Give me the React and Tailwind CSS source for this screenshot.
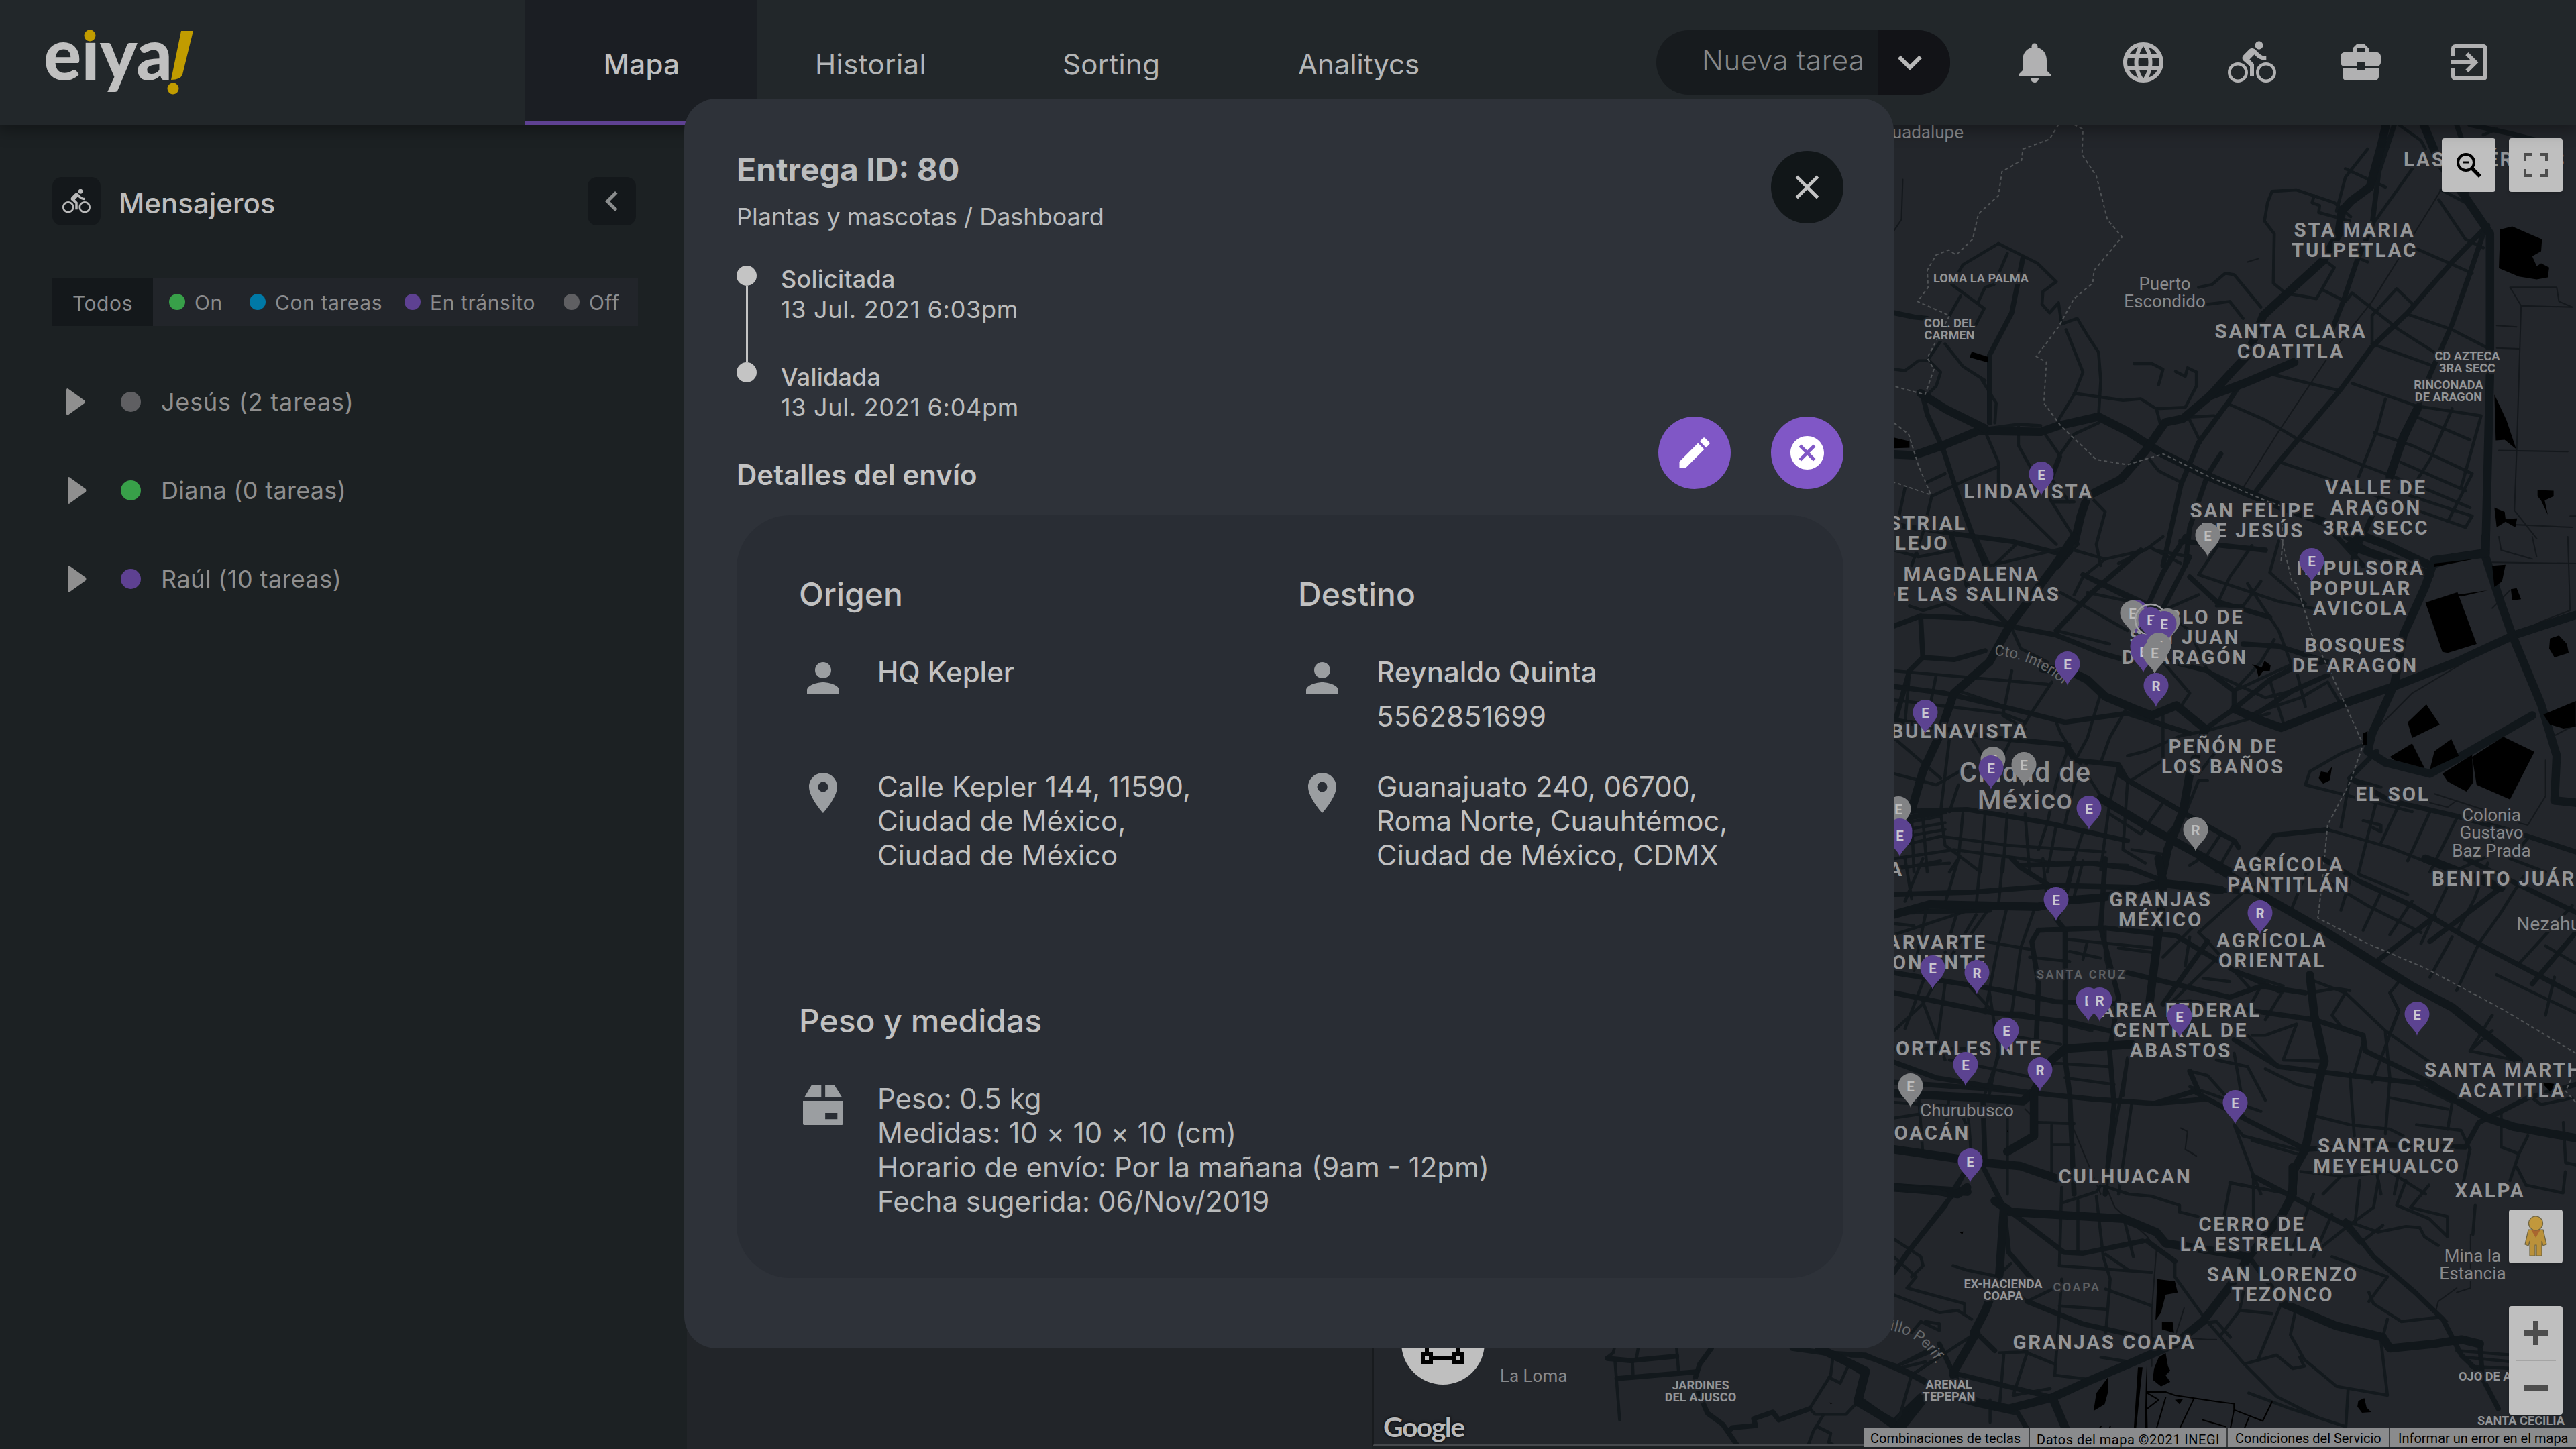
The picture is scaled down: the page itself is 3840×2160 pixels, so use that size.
import React from "react";
import {
  MdNotifications,
  MdLanguage,
  MdDirectionsBike,
  MdBusinessCenter,
  MdExitToApp,
  MdExpandMore,
  MdChevronLeft,
  MdClose,
  MdEdit,
  MdCancel,
  MdPerson,
  MdPlace,
} from "react-icons/md";

/* ---------- Map data ---------- */

// Each sector keeps its own grid; the matrix maps it onto the map's pixels.
const SECTORS = [
  {
    matrix: "matrix(0.6631 0 0 0.4209 2800 180)",
    wide: [
      "M20 1180 80 1185 145 1150 225 1098 365 1102 405 1080 495 1048 560 1100 640 1180 740 1258 870 1345 1000 1420 1140 1500 1240 1575",
      "M95 965 150 1020 240 1090",
      "M400 1575 440 1500 455 1400 470 1330 545 1270 600 1170 645 1068 685 1055 745 975 830 925 935 855",
      "M745 975 800 880 830 830 865 690 920 610 1000 495 1035 400 1042 320 1062 285 1105 235 1130 90 1142 10",
      "M1225 10 1262 150 1315 260 1375 400 1375 900 1365 1530 1290 1548 1240 1575",
      "M1150 1260 1180 1120 1212 1020",
    ],
    mid: [
      "M690 1575 700 1440 740 1255 770 1180",
      "M640 1575 680 1290 720 1140 790 990 810 940",
      "M850 1310 900 1210 1040 950 1110 800 1190 680 1290 500 1370 370",
      "M1060 1575 1130 1330 1212 1020 1240 900 1290 720 1330 540 1360 400",
      "M100 975 110 1040 145 1160 180 1330 210 1460 240 1575",
      "M250 1070 250 830 300 680 325 485",
      "M1020 740 1045 640 1075 500 1110 370 1125 180 1160 14",
      "M35 1430 180 1465 300 1490 400 1530",
      "M1000 1420 1090 1575",
      "M1300 14 1330 150 1320 270",
      "M1330 14 1420 45 1530 90",
      "M35 680 80 695 110 700",
    ],
    thin: [
      "M270 435 190 510 165 580 238 665 210 750",
      "M270 435 358 505 400 570 370 605 368 650 385 680 405 645 412 720 447 700 470 760 495 820 500 920 495 1050",
      "M422 740 460 890 440 970 405 1060",
      "M440 965 550 990 590 985 625 1020 690 1015 715 940 715 890 695 875 690 905 668 888",
      "M625 1020 635 1080 645 1070",
      "M575 860 615 860 640 880 630 935",
      "M790 1005 870 1060 940 1125 1090 1220 1240 1310 1330 1370",
      "M890 900 1035 955 M1065 930 1210 1010 1355 1045 1310 1300",
      "M1190 685 1290 740 1370 805 M1110 790 1250 870 M1205 450 1335 540",
      "M905 1210 980 1250 1140 1340 1320 1440 1335 1400 1170 1315",
      "M1115 1105 1200 1150 1335 1250 1280 1420 M1212 1050 1330 1130 M1175 1210 1320 1310",
      "M1140 985 1120 1100 1080 1260 M1290 1020 1240 1200 1200 1300",
      "M720 590 750 580 780 540 800 545 860 660 M740 650 790 640 820 700",
      "M885 250 940 245 1025 290 1062 340 M885 250 875 290 868 355 890 400 888 575 915 610 985 630 1025 520 1000 490",
      "M980 265 975 290 992 300 990 325 1060 355 M1000 600 1050 640 1065 610 1110 665 1170 740 1230 800 1250 820",
      "M1110 790 1110 690 1165 595 1205 655 M1085 490 1100 500",
      "M1170 14 1220 70 1230 100 M1360 50 1390 30 M1205 160 1110 370 M1260 280 1320 420 1360 450 M1265 245 1320 290",
      "M230 910 265 1000 262 1070 M35 880 60 885 90 850 115 850 140 890 130 940 110 970 M150 790 190 870 240 920",
      "M240 1100 270 1210 270 1300 400 1500 M315 1075 315 1150 350 1250 450 1500 M375 1110 410 1190 390 1270 430 1350",
      "M495 1070 440 1110 405 1190 385 1270 M120 1330 200 1270 270 1225 M110 1280 150 1250 M245 1090 315 1075 365 1080",
      "M120 1330 100 1460 75 1575 M60 1300 40 1450 M390 1350 440 1350 M470 1320 510 1385 490 1500 500 1575",
      "M610 1200 630 1240 680 1280 M690 1050 755 1045 M700 1060 725 1140 M540 1568 610 1510 680 1568 M310 1500 260 1575",
      "M1050 170 1140 235 M1100 100 1050 200 1030 320 M160 690 185 620 M110 850 140 780 M225 640 240 590 260 580 290 470",
    ],
    faint: [
      "M1420 590 1525 590 1530 640 1560 660 1445 655 1420 590 M1445 655 1435 1170 1430 1380 1480 1480",
      "M1390 725 1435 730 M1390 805 1440 808 M1395 1168 1550 1172 M55 208 52 350 35 390 M1110 640 1240 310 1265 245 M820 1300 900 1100 1010 840 1110 640",
      "M1430 1430 1560 1440 M1555 1400 1568 1400 M830 500 855 488",
    ],
    water: [
      "M1398 385 1425 374 1470 405 1492 420 1490 462 1470 480 1480 515 1490 505 1508 520 1505 555 1480 562 1440 552 1395 522Z",
      "M1385 970 1412 1060 1434 1163 1408 1130 1388 1132Z M1482 1308 1518 1310 1518 1330 1498 1345 1505 1395 1490 1345 1482 1330Z",
      "M35 1122 70 1135 70 1158 35 1160Z M210 818 246 836 246 856 205 838Z M1385 1370 1408 1385 1410 1410 1436 1408 1432 1440 1410 1420 1390 1440Z",
    ],
    border: [
      "M405 14 385 65 325 100 322 140 278 180 270 265 225 330 212 420 175 475 158 458 130 475 110 530 112 590 88 640 160 690 110 840 125 880 105 970 35 940",
      "M440 14 460 30 458 120 490 195 515 350 548 412 485 530 482 575 440 630 405 730 355 835 378 855 372 1000 410 1080 490 1200 560 1218 640 1180 740 1258 870 1345 905 1365 910 1470 905 1568",
      "M35 1070 68 1110 90 1220 118 1325 35 1280",
    ],
  },
  {
    matrix: "matrix(0.6631 0 0 0.3333 2800 800)",
    wide: [
      "M440 0 400 120 295 400 250 560 170 700 135 900 100 1050 75 1220",
      "M1568 350 1430 440 1300 560 1165 665 1040 750 905 855 850 815 800 770",
      "M370 590 430 600 470 640 510 715 570 765 615 800 670 755 735 860",
      "M1365 0 1365 90 1400 300 1425 440 1490 750 1525 980 1520 1180 1568 1190",
      "M1085 0 1060 40 1160 110 1240 170 M1365 75 1250 105 1230 220 1180 440 1160 660 1110 880 1100 960 1140 1010 1240 1060 1330 960 1470 800",
      "M735 860 700 1060 685 1230 650 1400 640 1500 M500 1170 600 1290 700 1400 790 1500",
    ],
    mid: [
      "M35 400 95 355 210 365 295 400 400 440 500 520 570 560",
      "M295 400 200 220 165 0 M95 355 100 540 70 600 40 810 M100 540 170 550 240 510",
      "M35 670 150 700 300 770 420 830 560 790 700 880",
      "M460 170 590 300 M590 60 480 250 400 420 M690 0 640 160 610 290",
      "M735 860 800 770 800 690 740 600 660 560 M800 770 880 640 930 590 1000 560 M1010 620 930 690 860 780 830 810",
      "M680 20 870 60 M700 90 640 320 M35 820 260 900 420 930 440 1000 540 1020 560 1090",
      "M35 1230 200 1220 380 1280 560 1360 M150 1230 60 1260 M560 1090 640 1180 690 1240 800 1360 810 1390",
      "M540 1020 545 1070 690 1240 M820 480 900 490 1010 560 M700 180 760 290 880 360",
      "M1120 960 1060 1080 1150 1180 1300 1250 1430 1320 1568 1410 M1010 1310 890 1335 860 1410 830 1500",
      "M1050 0 1100 60 1150 120",
    ],
    thin: [
      "M70 0 90 90 170 60 M220 0 250 130 440 40 M35 60 90 90 M440 60 510 100 600 60 640 0 M510 100 460 180 440 260",
      "M465 170 640 330 720 260 M590 300 470 250 M410 250 560 420 M700 90 620 60 M760 50 720 170 900 290 1000 330",
      "M840 40 790 180 760 310 820 310 860 200 M830 210 900 420 930 580 M640 330 700 420 740 600 M900 20 880 160 960 300",
      "M35 600 380 660 M35 730 280 790 330 830 M130 620 110 820 M70 610 60 830 M180 690 270 750 M300 600 280 800 330 860",
      "M390 650 340 800 310 900 M500 700 470 900 440 1010 M560 760 520 900 500 1010 M640 560 700 700 680 760",
      "M400 420 520 480 M210 365 150 300 100 330 70 310 M300 410 320 500 380 560 M740 600 870 720 930 690 1010 620",
      "M860 780 950 720 1010 650 1040 750 M800 690 930 570 M880 640 910 830 M940 600 960 760 M890 460 860 560 800 690",
      "M400 830 410 880 500 1160 M640 800 640 1000 560 1100 M560 790 660 860 M470 1010 440 1110 420 1280 M560 980 600 960 680 890 730 870",
      "M430 930 400 1100 380 1280 360 1400 M35 900 140 1080 M160 900 140 1230 M140 1230 150 1380 230 1500",
      "M200 870 240 1000 M35 1060 130 1110 200 1030 M300 900 260 1060 M180 1110 160 1230 M540 1030 520 1190 500 1490",
      "M560 1100 550 1400 600 1460 M640 1190 590 1330 M590 1330 520 1240 M690 1240 650 1330 M770 1330 740 1420 700 1470",
      "M800 1360 760 1500 M400 1290 380 1500 M460 1320 430 1500 M330 1240 340 1500 M290 1240 280 1500 M240 1240 230 1500 M190 1240 180 1440 160 1500",
      "M35 1290 140 1250 M35 1320 150 1280 M35 1350 150 1310 M35 1390 140 1340 290 1380 510 1410 M35 1440 170 1400 400 1460 560 1470",
      "M35 1490 140 1450 M100 1260 110 1500 M75 1260 80 1500 M570 1400 640 1420 M1120 1180 1080 1500 M1060 1080 1040 1300",
      "M1010 1310 1150 1390 1290 1500 M1170 1200 1130 1370 M1240 1230 1190 1450 M1300 1260 1240 1500 M1390 1310 1370 1430 1290 1500 M1060 1080 1130 1120",
      "M960 1110 970 1050 1040 970 1090 930 M960 1110 1060 1160 1200 1230 M1460 1350 1420 1440 1500 1500 M1090 1270 1130 1290 1130 1320 1110 1300",
      "M735 870 880 790 M720 1060 760 960 780 930 M690 1240 720 1090 740 1090",
    ],
    faint: [
      "M1380 115 1568 120 M1395 0 1400 60 1470 100 M1470 0 1480 90 M1550 0 1555 330 1490 380 1430 440 M1420 240 1380 320",
      "M1500 1000 1500 1160 1460 1290 1440 1280 M1568 840 1510 900 M1240 1190 1280 1210 1300 1180",
      "M1120 860 1200 700 1420 440 M1250 1150 1390 1240",
    ],
    water: [
      "M1230 295 1302 248 1345 480 1280 520 1268 515Z M1510 455 1530 442 1548 480 1552 520 1520 540 1508 500Z",
      "M1335 985 1405 895 1475 962 1420 1175 1345 1110Z M1268 1060 1335 975 1337 1100 1322 1140 1280 1095Z M1150 985 1200 925 1228 1035 1160 1000Z",
      "M1240 1040 1250 960 1288 905 1305 980Z M1190 830 1232 750 1262 840 1200 900Z M1495 795 1568 735 1568 850 1540 858 1510 840Z",
      "M1380 130 1410 125 1402 200 1385 225Z M1422 235 1435 230 1445 280 1425 285Z M840 570 862 585 868 555 882 575 880 600 865 600 855 630 850 590Z",
      "M1020 1028 1015 1090 1000 1105 990 1080 995 1050 1010 1055Z M1090 880 1100 870 1098 930 1088 935Z M1250 120 1340 100 1250 135Z M1300 260 1370 240 1310 268Z",
    ],
    border: ["M905 0 930 200 940 210 975 440 1020 620 1090 930 1060 1100 1010 1290 1000 1500"],
  },
  {
    matrix: "matrix(0.6631 0 0 0.3333 2800 1280)",
    wide: [
      "M35 250 115 205 360 215 430 185 500 175 640 110 770 140",
      "M730 0 850 150 1000 320 1200 570 1290 665 1440 905",
      "M970 520 980 700 1003 905 990 1000 960 1300 935 1390 930 1500",
      "M35 1050 230 1070 325 1085 350 1040 390 900 420 850 570 830",
      "M630 0 640 100 635 250 610 640 M1230 0 1400 130",
      "M1240 1010 1370 1160 1430 1200 1568 1250",
      "M350 1050 350 1240 290 1310 M35 1300 240 1360 320 1375 400 1430 M35 1470 200 1490",
    ],
    mid: [
      "M35 160 210 150 400 120 600 130 640 110 M35 240 250 230 M440 0 420 170 400 270 420 320 420 900 430 1050 440 1500",
      "M315 30 480 20 570 45 640 100 M360 320 510 310 670 345 800 500 900 590",
      "M360 320 345 370 360 560 355 820 M510 0 500 310 540 620 520 860 530 1100 510 1500",
      "M35 510 280 590 400 640 560 650 M35 600 260 690 430 730 520 770 M35 1000 250 1030 360 1050 480 1075 620 1095 740 1075",
      "M1000 0 1080 100 1200 210 1320 350 1568 610 M850 150 770 140 M740 370 640 650",
      "M560 510 790 620 860 570 960 600 M640 650 700 640 980 720 1090 790 1095 860 1250 1010",
      "M740 1075 830 1170 960 1300 M740 1075 710 1040 620 1095 M800 810 900 930 1060 970 1240 1010",
      "M35 910 130 980 350 1050 M235 1070 240 1360 M960 1300 1130 1280 1320 1290 1350 1180 1460 1070 1568 1010",
      "M1320 0 1568 240 M1250 260 1120 460 M1400 130 1240 370 M1568 330 1470 560",
      "M300 0 320 40 400 140 M720 1040 700 950",
    ],
    thin: [
      "M100 0 60 190 M180 0 150 200 M230 0 220 210 M280 0 270 210 M370 0 380 200 M35 40 160 20 M60 0 75 180 M460 10 440 170",
      "M290 210 270 380 240 690 M350 230 320 400 300 690 M110 210 80 500 M180 220 150 420 M250 220 200 360 M35 290 80 300 M35 340 220 220",
      "M240 370 340 405 M340 440 430 460 M420 360 620 400 M510 320 510 440 520 520 M470 370 460 450 M540 400 620 420 M430 415 500 445",
      "M110 500 60 760 M150 560 130 860 M100 640 150 900 M35 770 100 650 220 250 M250 600 270 860 250 1050 M200 560 260 690",
      "M240 690 320 690 480 770 M260 780 410 830 M360 910 520 930 M420 980 530 1010 M35 850 240 850 M160 900 350 980 M300 690 280 830 240 1050",
      "M570 1090 540 1500 M560 900 550 1060 M560 890 520 1340 M35 1090 180 1110 200 1200 M160 1060 150 1200 M90 1050 100 1320 150 1330",
      "M35 1160 100 1140 M290 1070 290 1500 M200 1100 210 1350 160 1500 M360 1180 440 1185 M390 1185 390 1400 M390 1280 440 1280",
      "M710 300 640 440 M820 150 720 330 740 370 840 590 M770 430 660 640 M700 350 690 480 M860 570 830 680 M910 590 870 720 M800 500 910 570",
      "M730 535 790 550 M860 60 900 150 M960 70 930 220 M970 600 1030 580 1060 590 M970 540 1050 600 1140 770 1240 910",
      "M1050 600 1020 700 1040 750 1090 790 M840 790 870 790 940 740 910 900 1000 905 M760 900 830 930 870 1080 M800 870 820 1100 M830 790 860 850 900 930",
      "M700 950 740 970 830 1170 M700 1020 860 1130 M870 940 940 1010 985 1030 M980 1150 1060 1190 1150 1210 1180 1240",
      "M820 1240 960 1310 M840 1260 940 1320 M820 1240 800 1190 840 1400 860 1500 M790 1450 930 1500 M1060 960 1070 1240",
      "M1090 820 1070 960 M1140 780 1150 980 1140 1230 M1170 550 1150 600 1170 680 1150 780 M1210 1010 1290 1090 1280 1210 M1150 1070 1280 1120",
      "M1210 1190 1310 1215 1330 1300 M1400 1130 1400 1290 1440 1320 1420 1440 M1460 1240 1440 1320 M1540 1180 1545 1360 1568 1370 M1470 1070 1490 1100 1560 1070",
      "M1220 380 1280 120 M1300 330 1340 180 1370 20 M1060 100 1040 230 M1130 150 1090 320 M1200 190 1150 340 M1000 90 1100 210 1220 330 M1080 70 1190 160",
      "M1350 380 1400 240 1450 80 M1440 470 1560 210 M1520 530 1500 700 M1330 860 1380 770 M1380 700 1330 860 1430 900 M1500 390 1568 470 M1390 520 1568 690",
      "M1290 350 1240 530 M1350 380 1300 590 M1150 600 1170 680 1110 1000",
      "M950 1400 1050 1420 1150 1400 1230 1500 M1040 1420 1000 1500 M1120 1400 1130 1500 M1170 1400 1160 1500 M1310 1500 1330 1300",
    ],
    faint: ["M435 1190 500 1500 M330 1120 360 1180 M680 1205 695 1220 690 1300 715 1330 700 1310"],
    water: ["M290 1215 294 1225 290 1222Z M1490 1000 1530 1010 1510 1040Z"],
    border: ["M1000 70 988 265 1100 380 1230 490 1400 670 1568 870 M1568 940 1545 1040 1568 1090"],
  },
  {
    matrix: "matrix(0.6887 0 0 0.3333 2760 1740)",
    wide: [
      "M91 90 180 105 230 120 250 90 M310 150 345 200 590 230 660 290 680 340 860 400",
      "M955 0 955 120 930 220 860 400 820 530 760 690 700 790 600 880 520 950 435 1030 340 1080 270 1050 230 1000 220 920",
      "M435 1030 480 1250 M270 740 220 920 M290 640 265 740 M330 180 320 480 290 640",
      "M0 880 30 920 15 1040 90 1150 105 1250 M90 1150 150 1030",
      "M935 610 1050 710 1150 760 1165 810 1260 790 1320 770 1360 790",
    ],
    mid: [
      "M285 0 330 180 340 380 390 500 M91 470 130 360 220 120 250 0 M345 200 460 380 500 385 630 330 M380 600 500 700 640 765",
      "M640 765 690 790 M1070 240 1130 400 1220 560 1280 680 1320 840 1360 920 1400 1080 M870 40 1070 260 M220 920 435 1030",
      "M220 920 190 790 M1360 790 1365 920 M860 400 940 620 M700 420 640 330 M310 820 270 740",
      "M0 840 30 840 130 930 220 1030 270 1060 360 1100 380 1170 390 1250",
    ],
    thin: [
      "M455 90 450 440 M455 160 530 110 540 80 600 120 650 130 710 170 710 200 750 220 M490 150 490 240 490 380 M530 130 545 400 560 500 550 750",
      "M220 440 250 460 320 490 380 600 450 530 M345 430 320 480 M91 400 140 490 120 540 245 610 245 650 M91 570 190 650 230 640 260 680 M91 320 150 400 155 440 130 490",
      "M450 440 650 470 M450 620 550 635 M550 545 650 620 M550 390 600 460 M455 500 440 930 M190 730 150 690 130 740 M160 690 190 700 190 730",
      "M110 880 190 810 M100 900 160 870 M130 930 270 740 M330 830 320 1080 M380 830 350 1020 430 990 M540 850 600 870 M380 830 440 880 M320 830 380 825",
      "M440 930 520 950 M300 1040 300 1140 M700 430 700 490 770 690 850 880 920 1025 1010 1120 M850 880 920 840 955 900 980 890 970 850",
      "M850 540 840 640 910 655 M840 640 800 750 M930 610 880 860 M960 650 950 750 980 860 1050 980 1160 1020 1145 760 M860 1010 950 1080 1070 1160 1075 990",
      "M820 70 800 290 M820 70 950 120 M870 40 870 270 M1000 120 950 390 M1040 210 1000 400 M1100 60 1090 250 M1140 60 1130 180 1070 270 M1070 270 1010 370 M1200 60 1180 170 1250 230 1290 310",
      "M1070 240 1140 290 1200 265 1230 270 1240 310 1270 350 M1210 180 1290 220 1290 310 M1250 80 1210 180 M1070 270 1100 340 1150 260 M1440 0 1460 80 1540 115 1545 20",
      "M1350 170 1345 300 M1120 560 1130 610 1190 690 1275 670 M1160 680 1150 760 M1310 820 1430 840 M1330 850 1430 870 M1340 890 1430 900 M1040 400 1160 490 1120 600",
      "M750 700 790 690 820 760 M590 230 610 400",
    ],
    faint: [
      "M550 80 570 180 640 310 660 370 650 640 650 890 M1310 540 1270 600 1265 640 1290 690 M1340 300 1340 540 1310 560 M720 630 700 760 770 770 790 770",
    ],
    water: [
      "M662 500 700 510 706 560 680 570 670 650 658 685Z M555 940 556 1000 548 1060 524 1090 530 1010Z M620 895 630 895 616 1170 611 1170Z M1097 1045 1110 1033 1115 1075 1125 1095 1105 1098 1095 1070Z",
      "M665 850 680 830 685 890 690 910 680 930 690 960 670 980 652 950 655 900Z M672 690 695 690 698 740 672 725Z M638 890 642 1250 634 1250Z M700 1040 718 1035 710 1060Z M234 290 242 287 240 300Z",
    ],
    lines: [
      "M640 1005 680 1005 700 1020 780 1045 828 1058 828 1085 890 1135 910 1050 M740 1040 710 1170 M828 1085 820 1170 M860 1120 850 1170 M680 1030 660 1170",
      "M640 1010 665 1040 640 1080 M540 1160 520 1200 M560 1160 540 1240 M760 1130 810 1160",
    ],
    border: [],
  },
  {
    matrix: "matrix(0.574 0 0 0.3333 2000 1740)",
    wide: ["M1240 810 1360 910 1340 1050 1430 1140", "M1510 1040 1450 1170"],
    mid: [
      "M960 810 930 880 915 960 950 1100 990 1150 1030 1250 M690 855 750 865 870 845 M1170 810 1250 830 1350 840 1440 890 1568 1000",
      "M715 945 920 915 M1005 1180 1015 1165 1075 1155 1070 1125 1120 1095 1135 1130 1215 1080",
      "M1568 170 1470 380 1434 470 M1434 90 1530 100 1568 120",
    ],
    thin: [
      "M708 810 705 830 690 850 M770 810 765 860 M870 810 875 915 M710 870 722 1130 M755 860 757 935 M1275 860 1270 930 1215 1080 1230 1105 1310 1105 1340 1050",
      "M1315 890 1295 965 1265 940 M1250 1110 1225 1180 1210 1250 M1235 1160 1270 1190 1265 1230 1280 1245 M1520 820 1440 890 M1530 870 1480 930 1450 1110 1430 1150",
    ],
    faint: [],
    water: ["M1267 1052 1275 1055 1270 1060Z"],
    border: [],
  },
];

// Label sizes: lg district, sm small district, tn town, ct city, ft faint.
const LABELS = [
  ["tn", 2927, 206, "end", ["Guadalupe"]],
  ["lg", 3583, 248, "start", ["LAS AMÉRICAS"]],
  ["lg", 3510, 353, "middle", ["STA MARIA", "TULPETLAC"]],
  ["sm", 2953, 421, "middle", ["LOMA LA PALMA"]],
  ["tn", 3227, 432, "middle", ["Puerto", "Escondido"]],
  ["lg", 3415, 504, "middle", ["SANTA CLARA", "COATITLA"]],
  ["sm", 2906, 488, "middle", ["COL. DEL", "CARMEN"]],
  ["sm", 3678, 537, "middle", ["CD AZTECA", "3RA SECC"]],
  ["sm", 3650, 580, "middle", ["RINCONADA", "DE ARAGON"]],
  ["lg", 3024, 743, "middle", ["LINDAVISTA"]],
  ["lg", 3542, 737, "middle", ["VALLE DE", "ARAGON", "3RA SECC"]],
  ["lg", 3358, 771, "middle", ["SAN FELIPE", "DE JESÚS"]],
  ["lg", 2834, 790, "middle", ["INDUSTRIAL", "VALLEJO"]],
  ["lg", 2939, 866, "middle", ["MAGDALENA", "DE LAS SALINAS"]],
  ["lg", 3519, 857, "middle", ["IMPULSORA", "POPULAR", "AVICOLA"]],
  ["lg", 3257, 930, "middle", ["PUEBLO DE", "SAN JUAN", "DE ARAGÓN"]],
  ["lg", 3511, 972, "middle", ["BOSQUES", "DE ARAGON"]],
  ["lg", 2921, 1100, "middle", ["BUENAVISTA"]],
  ["ct", 3019, 1165, "middle", ["Ciudad de", "México"]],
  ["lg", 3314, 1123, "middle", ["PEÑÓN DE", "LOS BAÑOS"]],
  ["lg", 3567, 1194, "middle", ["EL SOL"]],
  ["tn", 3714, 1224, "middle", ["Colonia", "Gustavo", "Baz Prada"]],
  ["lg", 3412, 1299, "middle", ["AGRÍCOLA", "PANTITLÁN"]],
  ["lg", 2838, 1306, "end", ["A"]],
  ["lg", 3625, 1320, "start", ["BENITO JUÁREZ"]],
  ["lg", 3221, 1351, "middle", ["GRANJAS", "MÉXICO"]],
  ["nz", 3751, 1387, "start", ["Nezahualcóyotl"]],
  ["lg", 2962, 1415, "end", ["NARVARTE", "PONIENTE"]],
  ["ft", 3103, 1459, "middle", ["SANTA CRUZ"]],
  ["lg", 3387, 1412, "middle", ["AGRÍCOLA", "ORIENTAL"]],
  ["lg", 3251, 1516, "middle", ["AREA FEDERAL", "CENTRAL DE", "ABASTOS"]],
  ["lg", 3045, 1573, "end", ["PORTALES NTE"]],
  ["lg", 3614, 1605, "start", ["SANTA MARTHA"]],
  ["lg", 3745, 1636, "middle", ["ACATITLA"]],
  ["tn", 2932, 1664, "middle", ["Churubusco"]],
  ["lg", 2937, 1699, "end", ["COYOACÁN"]],
  ["lg", 3558, 1718, "middle", ["SANTA CRUZ", "MEYEHUALCO"]],
  ["lg", 3168, 1764, "middle", ["CULHUACAN"]],
  ["lg", 3712, 1785, "middle", ["XALPA"]],
  ["lg", 3357, 1835, "middle", ["CERRO DE", "LA ESTRELLA"]],
  ["lg", 3403, 1910, "middle", ["SAN LORENZO", "TEZONCO"]],
  ["tn", 3686, 1881, "middle", ["Mina la", "Estancia"]],
  ["sm", 2986, 1920, "middle", ["EX-HACIENDA", "COAPA"]],
  ["ft", 3096, 1925, "middle", ["COAPA"]],
  ["lg", 3137, 2011, "middle", ["GRANJAS COAPA"]],
  ["sm", 2905, 2070, "middle", ["ARENAL", "TEPEPAN"]],
  ["sm", 3665, 2058, "start", ["OJO DE AGUA"]],
  ["sm", 3758, 2124, "middle", ["SANTA CECILIA"]],
  ["tn", 2236, 2060, "start", ["La Loma"]],
  ["sm", 2535, 2071, "middle", ["JARDINES", "DEL AJUSCO"]],
];

const LABEL_STYLE = {
  lg: { cls: "fill-[#949597] font-bold text-[29.5px] tracking-[2.8px]", step: 30.2 },
  sm: { cls: "fill-[#949597] font-bold text-[18.2px] tracking-[0px]", step: 17.7 },
  tn: { cls: "fill-[#88898b] font-normal text-[26px]", step: 26.3 },
  nz: { cls: "fill-[#88898b] font-normal text-[28.5px]", step: 28 },
  ct: { cls: "fill-[#8c8d90] font-medium text-[41px] tracking-[1.5px]", step: 40.5 },
  ft: { cls: "fill-[#5e6063] font-semibold text-[18px] tracking-[2.6px]", step: 18 },
};

const PINS = [
  [3043, 738, "E"], [3291, 829, "E", 1], [3446, 867, "E"], [3082, 1021, "E"],
  [2870, 1093, "E"], [2971, 1163, "E", 1], [2968, 1176, "E"], [3017, 1171, "E", 1],
  [3114, 1236, "E"], [3273, 1268, "R", 1], [2830, 1237, "E", 1], [2832, 1270, ""], [2832, 1276, "E"],
  [3184, 944, ""], [3179, 945, "E", 1], [3231, 957, "", 1], [3206, 955, "E"], [3226, 961, "E"],
  [3194, 995, ""], [3195, 1002, "E"], [3218, 993, "E", 1], [3212, 1004, "E", 1], [3214, 1053, "R"],
  [3065, 1372, "E"], [3369, 1392, "R"], [2881, 1474, "E"], [2947, 1481, "R"],
  [3113, 1522, "E"], [3130, 1522, "R"], [3249, 1546, "E"], [3603, 1543, "E"],
  [2991, 1567, "E"], [2930, 1618, "E"], [3041, 1626, "R"], [2848, 1650, "E", 1],
  [3332, 1675, "E"], [2937, 1762, "E"],
];

function Roads({ paths = [], stroke, width, dash }) {
  return paths.map((d, i) => (
    <path
      key={i}
      d={d}
      fill="none"
      stroke={stroke}
      strokeWidth={width}
      strokeDasharray={dash}
      strokeLinejoin="round"
      strokeLinecap={dash ? "butt" : "round"}
      vectorEffect="non-scaling-stroke"
    />
  ));
}

function Pin({ x, y, letter, gray }) {
  return (
    <g transform={`translate(${x} ${y})`}>
      <path
        d="M0 1C-2-9-18.500-17-18.500-31.500A18.500 18.500 0 0 1 18.500-31.500C18.500-17 2-9 0 1Z"
        fill={gray ? "#828385" : "#5c4391"}
      />
      <text
        y="-23.5"
        textAnchor="middle"
        className={gray ? "fill-[#bcbcbc] text-[20.5px] font-bold" : "fill-[#c9c6d1] text-[20.5px] font-bold"}
      >
        {letter}
      </text>
    </g>
  );
}

function MapCanvas() {
  return (
    <svg viewBox="2048 186 1792 1967" className="block h-[1967px] w-[1792px] font-[Roboto,sans-serif]">
      <rect x="2048" y="186" width="1792" height="1974" fill="#23262b" />
      {SECTORS.map((s, i) => (
        <g key={i} transform={s.matrix}>
          <Roads paths={s.faint} stroke="#14181c" width="2" />
          <Roads paths={s.thin} stroke="#13191d" width="4.5" />
          <Roads paths={s.mid} stroke="#12181c" width="7.5" />
          <Roads paths={s.wide} stroke="#11171b" width="12.5" />
          <Roads paths={s.lines} stroke="#000000" width="2" />
          <Roads paths={s.border} stroke="#505356" width="2" dash="5 4" />
          {s.water.map((d, j) => (
            <path key={j} d={d} fill="#000000" />
          ))}
        </g>
      ))}
      {LABELS.map(([kind, x, y, anchor, lines], i) => (
        <text
          key={i}
          textAnchor={anchor}
          className={LABEL_STYLE[kind].cls}
          stroke="#23262b"
          strokeWidth="5"
          paintOrder="stroke"
          strokeLinejoin="round"
        >
          {lines.map((line, j) => (
            <tspan key={j} x={x} y={y + j * LABEL_STYLE[kind].step}>
              {line}
            </tspan>
          ))}
        </text>
      ))}
      <path id="interior" d="M2973 977Q3030 980 3080 1024" fill="none" />
      <text className="fill-[#67696c] text-[22px]">
        <textPath href="#interior">Cto. Interior</textPath>
      </text>
      <path id="anillo" d="M2740 2000Q2780 1974 2818 1983Q2866 1992 2886 2034" fill="none" />
      <text className="fill-[#67696c] text-[23px]" textAnchor="end">
        <textPath href="#anillo" startOffset="100%">Anillo Perif.</textPath>
      </text>
      {PINS.slice(0, 15).map(([x, y, letter, gray], i) => (
        <Pin key={i} x={x} y={y} letter={letter} gray={gray} />
      ))}
      <circle cx="3206" cy="924" r="23" fill="none" stroke="#a2a2a4" strokeWidth="2.5" />
      {PINS.slice(15).map(([x, y, letter, gray], i) => (
        <Pin key={i} x={x} y={y} letter={letter} gray={gray} />
      ))}
      <circle cx="2151" cy="2002" r="62" fill="#bfbfbf" />
      <g fill="none" stroke="#000000">
        <path d="M2127 1970V2018M2174 1970V2018" strokeWidth="6" />
        <path d="M2134 2025H2168" strokeWidth="6" />
        <rect x="2121" y="2019" width="12" height="12" strokeWidth="6" />
        <rect x="2168" y="2019" width="12" height="12" strokeWidth="6" />
      </g>
    </svg>
  );
}

/* ---------- Map controls ---------- */

function MapControls() {
  return (
    <>
      <div className="absolute top-[20px] right-[20px] flex gap-[20px]">
        <div className="flex size-[80px] items-center justify-center rounded-[4px] bg-[#bfbfbf]">
          <svg viewBox="0 0 40 40" className="size-[40px]" fill="none" stroke="#000">
            <circle cx="16" cy="16" r="12" strokeWidth="4" />
            <path d="M25 25 37 37" strokeWidth="5.5" />
            <path d="M11 16H21" strokeWidth="3" />
          </svg>
        </div>
        <div className="flex size-[80px] items-center justify-center rounded-[4px] bg-[#bfbfbf] shadow-md">
          <svg viewBox="0 0 36 36" className="size-[36px]" fill="none" stroke="#4d4d4d" strokeWidth="4">
            <path d="M2 12V2H12M24 2H34V12M34 24V34H24M12 34H2V24" />
          </svg>
        </div>
      </div>
      <div className="absolute right-[20px] bottom-[44px] flex flex-col gap-[64px]">
        <div className="flex size-[80px] items-center justify-center rounded-[4px] bg-[#bfbfbf] shadow-md">
          <svg viewBox="0 0 36 62" className="h-[62px] w-[36px]" stroke="#6f6440" strokeWidth="1.2">
            <path d="M7 21H29L34 43 29 45 27 38V60H19V44H17V60H9V38L7 45 2 43Z" fill="#ba913a" />
            <path d="M11 21H25L18 33Z" fill="#a9662f" stroke="none" />
            <circle cx="18" cy="11.500" r="10.500" fill="#c1983c" />
          </svg>
        </div>
        <div className="flex h-[162px] w-[80px] flex-col items-center rounded-[4px] bg-[#bfbfbf] shadow-md">
          <div className="flex h-[80px] items-center">
            <svg viewBox="0 0 36 36" className="size-[36px]" stroke="#4d4d4d" strokeWidth="8">
              <path d="M18 0V36M0 18H36" />
            </svg>
          </div>
          <div className="h-[2px] w-[60px] bg-[#a5a5a5]" />
          <div className="flex h-[80px] items-center">
            <div className="h-[8px] w-[36px] bg-[#4d4d4d]" />
          </div>
        </div>
      </div>
      <div className="absolute bottom-[2px] left-[14px] text-[41px] leading-[48px] font-bold tracking-[-1.6px] text-[#b9b9b9] [font-family:Lato,sans-serif] [text-shadow:0_0_4px_#000]">
        Google
      </div>
      <div className="absolute right-0 bottom-[-4px] flex h-[28px] bg-[#8a8b8d] text-[20px] leading-[30px] whitespace-nowrap text-black [font-family:Roboto,sans-serif]">
        <span className="w-[248px] border-r-2 border-[#3c3e40] pl-[10px]">Combinaciones de teclas</span>
        <span className="w-[295px] border-r-2 border-[#3c3e40] pt-[2px] pl-[10px] tracking-[0.5px]">Datos del mapa ©2021 INEGI</span>
        <span className="w-[242px] border-r-2 border-[#3c3e40] pl-[11px]">Condiciones del Servicio</span>
        <span className="w-[277px] pl-[12px]">Informar un error en el mapa</span>
      </div>
    </>
  );
}

/* ---------- Header ---------- */

function Logo() {
  return (
    <svg viewBox="0 0 240 120" className="h-[120px] w-[240px]">
      <text x="6" y="88" textLength="192" lengthAdjust="spacingAndGlyphs" className="fill-[#c0c0c0] text-[106px] font-black [font-family:Lato,sans-serif]">
        eıya
      </text>
      <circle cx="75" cy="22" r="8.500" fill="#c19c00" />
      <path d="M211 15H229L213 80Q210 88 196 88Z" fill="#c19c00" />
      <circle cx="199" cy="101" r="8.500" fill="#c19c00" />
    </svg>
  );
}

function Header() {
  return (
    <header className="relative z-10 flex h-[186px] bg-[#22272a] shadow-[0_4px_22px_4px_rgba(0,0,0,0.35)]">
      <div className="w-[783px] pt-[31px] pl-[59px]">
        <Logo />
      </div>
      <nav className="flex text-[42px] leading-[60px] text-[#b4b5b6]">
        <span className="w-[346px] border-b-[6px] border-[#5e4192] bg-[#1b1e23] pt-[66px] pl-[1px] text-center font-medium tracking-[0.3px] text-[#c0c0c0]">
          Mapa
        </span>
        <span className="w-[332px] pt-[66px] pl-[86px] tracking-[0.4px]">Historial</span>
        <span className="w-[200px] pt-[66px] pl-[123px] tracking-[0.3px]">Sorting</span>
        <span className="w-[500px] pt-[66px] pl-[274px]">Analitycs</span>
      </nav>
      <div className="mt-[45px] ml-[308px] flex h-[96px] w-[438px] overflow-hidden rounded-full bg-[#171b1e]">
        <span className="w-[330px] pl-[68px] text-[42px] leading-[90px] font-light tracking-[0.6px] text-[#85878a]">Nueva tarea</span>
        <span className="flex w-[108px] items-center bg-[#121317] pl-[12px] text-[#b9b9b9]">
          <MdExpandMore className="size-[72px]" />
        </span>
      </div>
      <div className="mt-[57px] ml-[90px] flex gap-[90px] text-[#b1b1b2]">
        <MdNotifications className="size-[72px]" />
        <MdLanguage className="size-[72px]" />
        <MdDirectionsBike className="size-[72px]" />
        <MdBusinessCenter className="size-[72px]" />
        <MdExitToApp className="size-[72px]" />
      </div>
    </header>
  );
}

/* ---------- Sidebar ---------- */

const COURIERS = [
  { name: "Jesús (2 tareas)", dot: "bg-[#5f5f62]", arrow: "-ml-[2px] mr-[2px]", text: "tracking-[0.8px]" },
  { name: "Diana (0 tareas)", dot: "bg-[#38a049]", arrow: "", text: "tracking-[0.3px]" },
  { name: "Raúl (10 tareas)", dot: "bg-[#5e4192]", arrow: "", text: "tracking-[0.4px]" },
];

const FILTERS = [
  { name: "On", dot: "bg-[#38a049]", width: "w-[120px]" },
  { name: "Con tareas", dot: "bg-[#0079a6]", width: "w-[231px]" },
  { name: "En tránsito", dot: "bg-[#5e4192]", width: "w-[237px]" },
  { name: "Off", dot: "bg-[#5f5f62]", width: "w-[100px]" },
];

function Sidebar() {
  return (
    <aside className="w-[1024px] bg-[#1c2123] pt-[78px] pl-[78px]">
      <div className="flex items-center">
        <span className="flex size-[72px] items-center justify-center rounded-[14px] bg-[#14181b] text-[#b9b9b9]">
          <MdDirectionsBike className="size-[42px]" />
        </span>
        <h2 className="ml-[27px] w-[699px] pt-[6px] text-[42px] leading-[60px] font-medium text-[#bdbdbd]">Mensajeros</h2>
        <span className="flex size-[72px] items-center justify-center rounded-[14px] bg-[#14181b] text-[#8b8d8e]">
          <MdChevronLeft className="size-[60px]" />
        </span>
      </div>
      <div className="mt-[78px] flex h-[72px] w-[873px] items-center bg-[#22252a] text-[30px] tracking-[0.6px] text-[#8b8c8e]">
        <span className="mr-[24px] h-[72px] w-[150px] bg-[#14181b] pt-[2px] text-center leading-[72px]">Todos</span>
        {FILTERS.map((f) => (
          <span key={f.name} className={`flex items-center gap-[14px] ${f.width}`}>
            <i className={`size-[24px] rounded-full ${f.dot}`} />
            <span className="pt-[2px] whitespace-nowrap">{f.name}</span>
          </span>
        ))}
      </div>
      <ul className="mt-[83px] text-[36px] leading-[60px] text-[#8f8f8f]">
        {COURIERS.map((c) => (
          <li key={c.name} className="mb-[72px] flex items-center">
            <span className="ml-[23px]">
              <svg viewBox="0 0 28 40" className={`h-[40px] w-[28px] ${c.arrow}`} fill="#8f8f8f">
                <path d="M0 2Q0 0 2 0L27 18Q28 20 27 22L2 40Q0 40 0 38Z" />
              </svg>
            </span>
            <i className={`ml-[51px] size-[30px] rounded-full ${c.dot}`} />
            <span className={`ml-[30px] ${c.text}`}>{c.name}</span>
          </li>
        ))}
      </ul>
    </aside>
  );
}

/* ---------- Delivery dialog ---------- */

function PackageIcon() {
  return (
    <svg viewBox="0 0 24 24" className="size-[72px] shrink-0" fill="#9b9ea1">
      <path d="M6.400 2H11.100V8.100H2.800ZM13.050 2H17.500L21.300 8.100H13.050Z" />
      <path fillRule="evenodd" d="M2 10H22V21.300Q22 22 21.300 22H2.700Q2 22 2 21.300ZM13.050 16V19.100H19.100V16Z" />
    </svg>
  );
}

function Stop({ title, name, phone, address }) {
  return (
    <div>
      <h4 className="text-[48px] leading-[60px] font-medium">{title}</h4>
      <div className="mt-[59px] flex h-[171px] gap-[45px]">
        <MdPerson className="size-[72px] shrink-0 text-[#9b9ea1]" />
        <div className="pt-[1px] leading-[52px]">
          <p className="font-medium">{name}</p>
          {phone && <p className="mt-[14px] tracking-[0.4px]">{phone}</p>}
        </div>
      </div>
      <div className="flex gap-[45px]">
        <MdPlace className="size-[72px] shrink-0 text-[#9b9ea1]" />
        <div className="pt-[1px] leading-[51px]">
          {address.map((line) => (
            <p key={line}>{line}</p>
          ))}
        </div>
      </div>
    </div>
  );
}

function TimelineEntry({ title, date }) {
  return (
    <div className="h-[146px] text-[36px] leading-[46px]">
      <p className="font-medium tracking-[0.2px] text-[#c0c0c0]">{title}</p>
      <p className="-mt-[1px] tracking-[0.7px]">{date}</p>
    </div>
  );
}

function DeliveryDialog() {
  return (
    <section className="absolute top-[147px] left-[1020px] z-20 h-[1863px] w-[1803px] rounded-[48px] bg-[#2e3239] pt-[76px] pr-[75px] pl-[78px] text-[#babcbd]">
      <div className="flex h-[170px] justify-between">
        <div>
          <h2 className="text-[48px] leading-[60px] font-bold text-[#bbbdbe]">Entrega ID: 80</h2>
          <p className="mt-[18px] text-[36px] leading-[44px]">Plantas y mascotas / Dashboard</p>
        </div>
        <button className="mt-[2px] flex size-[108px] items-center justify-center rounded-full bg-[#111618] text-[#c4c4c4]">
          <MdClose className="size-[60px]" />
        </button>
      </div>
      <div className="flex h-[228px] gap-[36px]">
        <div className="flex h-[177px] flex-col items-center pt-[3px]">
          <i className="size-[30px] shrink-0 rounded-full bg-[#c4c4c4]" />
          <i className="w-[3px] grow bg-[#c4c4c4]" />
          <i className="size-[30px] shrink-0 rounded-full bg-[#c4c4c4]" />
        </div>
        <div>
          <TimelineEntry title="Solicitada" date="13 Jul. 2021 6:03pm" />
          <TimelineEntry title="Validada" date="13 Jul. 2021 6:04pm" />
        </div>
      </div>
      <div className="flex h-[113px] items-start justify-between">
        <h3 className="self-end text-[42px] leading-[52px] font-semibold text-[#c4c4c4]">Detalles del envío</h3>
        <div className="flex gap-[60px] text-white">
          <button className="flex size-[108px] items-center justify-center rounded-full bg-[#8057c6]">
            <MdEdit className="size-[60px]" />
          </button>
          <button className="flex size-[108px] items-center justify-center rounded-full bg-[#8057c6]">
            <MdCancel className="size-[60px]" />
          </button>
        </div>
      </div>
      <div className="mt-[34px] h-[1137px] w-[1650px] rounded-[80px] bg-[#292d34] pt-[88px] pl-[93px] text-[42px] text-[#c1c1c1]">
        <div className="grid h-[636px] grid-cols-[744px_744px]">
          <Stop
            title="Origen"
            name="HQ Kepler"
            address={["Calle Kepler 144, 11590,", "Ciudad de México,", "Ciudad de México"]}
          />
          <Stop
            title="Destino"
            name="Reynaldo Quinta"
            phone="5562851699"
            address={["Guanajuato 240, 06700,", "Roma Norte, Cuauhtémoc,", "Ciudad de México, CDMX"]}
          />
        </div>
        <h4 className="text-[48px] leading-[60px] font-medium">Peso y medidas</h4>
        <div className="mt-[59px] flex gap-[45px]">
          <PackageIcon />
          <div className="pt-[1px] leading-[51px] text-[#b8babb]">
            <p>Peso: 0.5 kg</p>
            <p className="tracking-[0.2px]">Medidas: 10 × 10 × 10 (cm)</p>
            <p>Horario de envío: Por la mañana (9am - 12pm)</p>
            <p>Fecha sugerida: 06/Nov/2019</p>
          </div>
        </div>
      </div>
    </section>
  );
}

export default function App() {
  return (
    <div className="relative h-[2160px] w-[3840px] overflow-hidden bg-[#1d2124] [font-family:Inter,sans-serif]">
      <Header />
      <main className="flex h-[1974px]">
        <Sidebar />
        <div className="w-[1021px] bg-[#222529]" />
        <div className="relative h-[1970px] w-[1795px] border-b-[3px] border-l-[3px] border-b-[#46494d] border-l-[#181b1e]">
          <MapCanvas />
          <MapControls />
        </div>
      </main>
      <DeliveryDialog />
    </div>
  );
}
